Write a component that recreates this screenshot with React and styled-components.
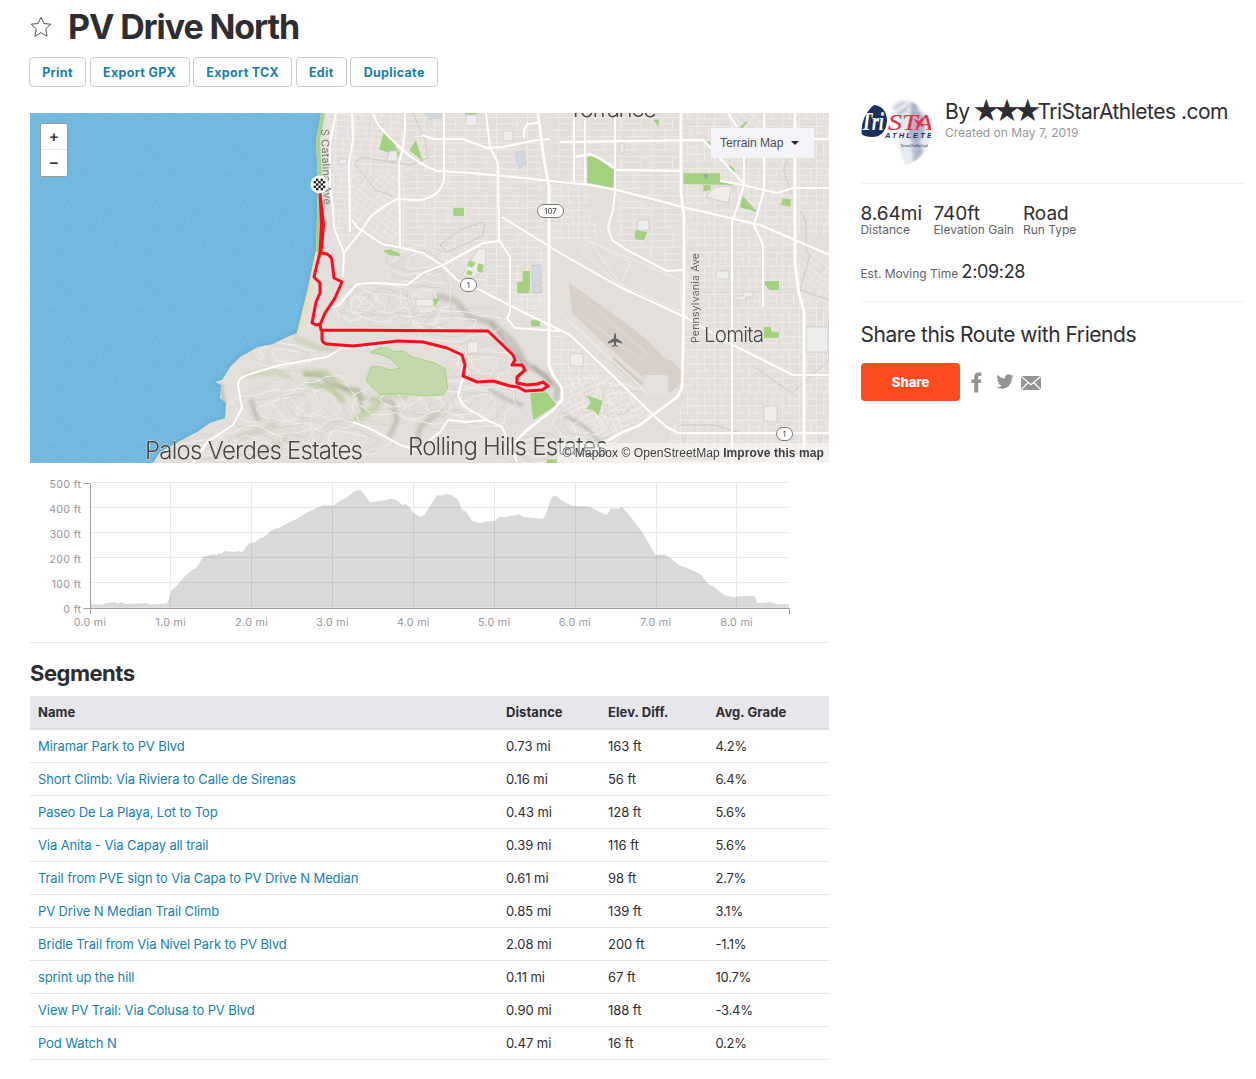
import React from "react"
import styled, { createGlobalStyle } from "styled-components"

const segments = [
  ["Miramar Park to PV Blvd", "0.73 mi", "163 ft", "4.2%"],
  ["Short Climb: Via Riviera to Calle de Sirenas", "0.16 mi", "56 ft", "6.4%"],
  ["Paseo De La Playa, Lot to Top", "0.43 mi", "128 ft", "5.6%"],
  ["Via Anita - Via Capay all trail", "0.39 mi", "116 ft", "5.6%"],
  ["Trail from PVE sign to Via Capa to PV Drive N Median", "0.61 mi", "98 ft", "2.7%"],
  ["PV Drive N Median Trail Climb", "0.85 mi", "139 ft", "3.1%"],
  ["Bridle Trail from Via Nivel Park to PV Blvd", "2.08 mi", "200 ft", "-1.1%"],
  ["sprint up the hill", "0.11 mi", "67 ft", "10.7%"],
  ["View PV Trail: Via Colusa to PV Blvd", "0.90 mi", "188 ft", "-3.4%"],
  ["Pod Watch N", "0.47 mi", "16 ft", "0.2%"],
]

const actions = [
  { label: "Print", width: 57 },
  { label: "Export GPX", width: 100 },
  { label: "Export TCX", width: 99 },
  { label: "Edit", width: 51 },
  { label: "Duplicate", width: 87.6 },
]

// elevation samples, three units to a pixel
const profile =
  "181,402 215,404 230,399 255,397 262,401 275,397 285,402 340,400 352,399 360,403 400,402 412,399 417,385 425,360 440,348 460,323 485,300 498,295 508,280 520,260 548,253 560,255 568,249 574,252 585,243 610,246 625,243 638,246 650,228 660,218 675,217 690,205 703,200 718,186 735,176 748,174 765,163 800,147 835,125 855,117 878,106 912,106 932,91 945,86 970,66 985,60 995,63 1020,97 1070,90 1080,86 1095,88 1107,95 1116,104 1127,102 1138,110 1150,129 1172,140 1185,132 1210,92 1222,75 1235,77 1250,72 1265,76 1285,90 1295,118 1308,125 1327,153 1350,160 1365,155 1395,152 1408,140 1425,142 1438,138 1460,135 1468,132 1480,141 1515,144 1538,147 1543,142 1555,110 1565,82 1575,76 1585,82 1590,88 1610,100 1628,107 1680,110 1710,126 1725,134 1733,132 1743,115 1765,117 1775,110 1800,138 1835,183 1855,218 1875,254 1905,254 1920,263 1948,286 1970,293 2012,313 2035,342 2052,350 2082,375 2110,382 2130,379 2174,378 2182,399 2220,397 2240,403 2277,402"

const coast =
  "M321 113L316 140L318 183L316 250L308 288L297 333L287 337L273 344L258 347L240 357L230 367L222 380L215 382L221 385L220 398L226 403L225 418L210 423L197 432L180 441L160 452L153 463"

const mainRoads = [
  "M336 113L330 143L330 187L333 207L334 228L344 253L343 277",
  "M352 113L353 140L349 163L350 232",
  "M405 113V130L403 147L399 163L400 247",
  "M373 113L378 125L390 138L403 150Q418 164 437 171L473 173L523 178L560 182L590 185L617 190L683 207L760 225L830 255",
  "M444 113V180Q440 197 420 200L397 199Q380 208 370 217L362 230L344 253",
  "M352 220L357 227L382 244L403 248L423 253L442 265L457 280L480 290L513 307L560 330L570 335L610 373L653 415L667 427L678 433H829",
  "M422 135L433 139L463 139L487 148L503 147L537 140L550 139",
  "M486 113L490 147L498 163L499 240L510 257V312L507 318L515 328L560 331",
  "M502 217L560 253L620 287L687 318L733 345L787 372L793 375H829",
  "M499 241L483 243L443 265L423 273L407 285L373 283L357 284L343 300Q338 307 333 307",
  "M538 123L527 124L524 130V138",
  "M574 113V182",
  "M585 113V185",
  "M615 113V192L613 210L608 227L612 240L627 250L667 271L683 270",
  "M560 142L703 140L744 184",
  "M780 139H829",
  "M575 157L590 154L603 160L617 170L682 171",
  "M720 181L743 185L777 193L793 188H829",
  "M764 113V190L754 225L763 245V307",
  "M744 158V185L732 223V463",
  "M728 113L737 127",
  "M193 463L207 442L233 425L242 408L238 385Q238 378 247 375L280 365L327 357L342 348L380 345",
  "M322 330V340",
  "M353 422L373 430L400 445L423 452",
  "M463 377L458 395Q461 404 467 408L487 420L502 427L510 445L517 462",
  "M423 445L440 432L448 420L467 422L487 420",
]

const arterials = [
  "M538 113L543 153L549 187V365L553 375L562 388V400L553 410L527 430L510 447",
  "M681 113V193L684 217V285L683 348L682 388L677 397L653 415L640 425L623 432L600 445L580 459",
  "M795 113V263L798 288L804 312V452L793 463",
]

const hills = [
  [420, 262, 30, 14], [390, 303, 36, 18], [455, 325, 44, 15], [425, 300, 25, 22],
  [280, 410, 42, 22], [320, 405, 40, 26], [250, 445, 40, 16], [345, 440, 40, 18],
  [440, 400, 44, 22], [485, 365, 28, 17], [480, 405, 36, 20], [590, 425, 32, 20],
  [400, 395, 40, 24], [360, 305, 22, 16], [285, 355, 28, 12], [620, 400, 25, 18],
  [535, 450, 30, 12], [205, 450, 27, 11],
]

const blob = (cx, cy, rx, ry, seed) => {
  const points = []
  for (let i = 0; i < 22; i++) {
    const a = (i / 22) * Math.PI * 2
    const r = 1 + 0.16 * Math.sin(a * 3 + seed) + 0.1 * Math.sin(a * 7 + seed * 2)
    points.push(`${(cx + Math.cos(a) * rx * r).toFixed(1)},${(cy + Math.sin(a) * ry * r).toFixed(1)}`)
  }
  return points.join(" ")
}

const Tile = ({ x, y, children }) => (
  <g transform={`translate(${x} ${y}) scale(.33333)`}>{children}</g>
)

const Streets = ({ id, w, h, angle }) => (
  <pattern
    id={id}
    width={w}
    height={h * 6}
    patternUnits="userSpaceOnUse"
    patternTransform={`rotate(${angle})`}
  >
    <path
      d={`M0 .5H${w}M0 ${h}H${w * 0.7}M0 ${h * 2}H${w}M${w * 0.3} ${h * 3}H${w}M0 ${h * 4}H${w}M0 ${h * 5}H${w * 0.8}M.5 0V${h * 6}M${w * 0.45} ${h * 2}V${h * 5}M${w * 0.7} 0V${h * 2}`}
      fill="none"
      stroke="#f1eeea"
      strokeWidth=".8"
    />
  </pattern>
)

const Shield = ({ x, y, w = 16, children }) => (
  <g>
    <rect x={x - w / 2} y={y - 6.5} width={w} height="13" rx="6.5" fill="#fff" stroke="#777" />
    <text x={x} y={y + 3} textAnchor="middle" fontSize="8" fill="#444">
      {children}
    </text>
  </g>
)

const RouteMap = () => (
  <MapDrawing viewBox="30 113 799 350" width="799" height="350">
    <defs>
      <pattern id="water" width="22" height="17" patternUnits="userSpaceOnUse">
        <rect width="22" height="17" fill="#71b8de" />
        <path
          d="M1 2l2 1M6 1h2M11 3l2-1M17 2l2 2M3 7l1 2M8 6l3 1M14 7h2M19 8l2-1M1 12h2M6 11l2 2M11 13l2-1M16 12l1 2M20 14h2M4 15l2 1M9 16h2M14 10h1"
          fill="none"
          stroke="#83c3e6"
          strokeWidth=".7"
        />
        <path d="M5 4h1M12 9h1M18 11h1M2 10h1M15 15h1" stroke="#68afd6" strokeWidth=".8" />
      </pattern>
      <Streets id="grid" w={31} h={6.5} angle={0} />
      <Streets id="gridWest" w={18} h={6} angle={3} />
      <Streets id="gridSlope" w={19} h={6} angle={38} />
      <Streets id="gridFine" w={13} h={5} angle={-25} />
      <Streets id="gridSouth" w={17} h={7} angle={0} />
      <filter id="soft" x="-20%" y="-20%" width="140%" height="140%">
        <feGaussianBlur stdDeviation="1.6" />
      </filter>
      <clipPath id="land">
        <path d={`${coast}H829V113Z`} />
      </clipPath>
    </defs>

    <rect x="30" y="113" width="799" height="350" fill="url(#water)" />
    <path d={coast} fill="none" stroke="#63a9cf" strokeWidth="5" opacity=".5" filter="url(#soft)" />
    <g clipPath="url(#land)">
      <rect x="30" y="113" width="799" height="350" fill="#e4dfda" />
      <path d="M322 113L317 140L319 183L317 252" fill="none" stroke="#a9d187" strokeWidth="6" />
      <path d="M317 252L308 290L297 333" fill="none" stroke="#ebdfb9" strokeWidth="7" />

      <path d="M326 113H405V200L345 250H334Z" fill="url(#gridWest)" />
      <path d="M352 175H399V247L352 222Z" fill="#e4dfda" />
      <path d="M352 175H399V247L352 222Z" fill="url(#gridSlope)" />
      <path d="M405 113H538L550 330L500 300L444 258L402 246Z" fill="url(#grid)" />
      <path d="M550 113H681V205L617 188L550 178Z" fill="url(#grid)" />
      <path d="M550 184L588 187L592 215L601 232L590 240L552 240Z" fill="url(#gridSouth)" />
      <path d="M617 195L681 210V266L668 266L617 240Z" fill="url(#grid)" />
      <path d="M580 250L590 241L630 262L620 286ZM590 241L680 280L682 312L620 284Z" fill="none" stroke="#f1eeea" />
      <path d="M515 263L545 275V325L515 310Z" fill="url(#gridSouth)" />
      <path d="M681 113H829V463H660L683 400Z" fill="url(#gridSouth)" />
      <path d="M797 235H829V300H803Z" fill="#e4dfda" />
      <path d="M797 250H829V300H803Z" fill="url(#gridSlope)" />
      <path d="M565 375L610 375L650 415L580 450L562 410Z" fill="url(#gridFine)" />
      <path d="M552 332L570 337L606 375L570 390L552 370Z" fill="url(#gridSouth)" />
      <path d="M720 113H762V128H737Z" fill="#e4dfda" />
      <path d="M720 113H762V128H737Z" fill="url(#gridSlope)" />

      {/* shaded slopes */}
      <g filter="url(#soft)" fill="none" strokeLinecap="round">
        <path d="M438 296L456 301L470 317L493 323L513 342L526 364L545 375L558 389L556 398" stroke="#bbb7af" strokeWidth="6" opacity=".7" />
        <path d="M490 323L512 350L522 363M534 367L551 383" stroke="#8e8b84" strokeWidth="2.500" opacity=".6" />
        <path d="M296 338L315 347L335 350M246 375L275 372L287 376" stroke="#c9d2b6" strokeWidth="6" opacity=".8" />
        <path d="M305 373L325 373L345 390L363 398M310 383L332 389L342 400" stroke="#bdcba4" strokeWidth="6" opacity=".9" />
        <path d="M305 375L321 376L327 383L343 388L359 390L361 405L364 414" stroke="#989c87" strokeWidth="2.500" opacity=".7" />
        <path d="M251 401L258 420M372 399L392 402L397 420L390 435M437 414L420 427L417 442" stroke="#b5b2a8" strokeWidth="5" opacity=".65" />
        <path d="M221 385L224 402M490 390L508 400L522 405M565 415L585 427L600 442M672 458H710" stroke="#aeaba4" strokeWidth="3.500" opacity=".65" />
        <path d="M240 437L275 425M260 453L285 440M382 393L405 397M430 415L445 410" stroke="#c9cdbb" strokeWidth="6" opacity=".7" />
        <path d="M357 419L375 408L379 400" stroke="#c5d3a8" strokeWidth="8" opacity=".9" />
      </g>

      {hills.map(([x, y, rx, ry], i) => (
        <g key={i} fill="none" strokeWidth=".8">
          <polygon points={blob(x, y, rx, ry, i)} stroke="#f3f0ed" strokeWidth=".9" />
          <polygon points={blob(x, y, rx * 0.72, ry * 0.72, i)} stroke="#cbc6bf" opacity=".6" />
          <polygon points={blob(x, y, rx * 0.46, ry * 0.5, i + 1)} stroke="#f3f0ed" strokeWidth=".9" />
          <polygon points={blob(x, y, rx * 1.2, ry * 1.2, i + 2)} stroke="#cbc6bf" opacity=".45" />
        </g>
      ))}
      <path d="M413 113L425 140L428 158L410 165L360 157L355 165L376 190L392 196M483 222L474 225L460 230L440 245L447 252L470 242L483 235L485 222M791 158Q780 165 786 178T790 195M800 211Q808 220 806 235T810 255L800 290L829 300M680 425L715 425L740 433M753 366L770 378L792 393L829 360V320" fill="none" stroke="#c7c3be" strokeWidth=".8" />

      {/* parks */}
      <g fill="#a4d17f">
        <Tile x={290} y={110}>
          <path d="M282 65L300 80L330 130L320 145L295 128L267 118ZM378 90L397 152L358 120ZM490 293H522V318H490ZM278 422L300 418L328 430L330 438L300 436ZM525 9H560V14H525ZM698 483H720V540H682V516H698ZM86 425L98 430L95 444H84Z" />
        </Tile>
        <Tile x={560} y={110}>
          <path d="M82 140L100 138L162 180L160 233L82 218ZM280 30L297 28L296 52ZM370 190H480V212L525 225L370 222ZM430 225H452V240L430 245ZM548 257L592 306L540 292ZM668 265L692 268V290L663 285ZM225 360L262 366L252 390L225 388ZM615 513H657V540H630L615 524ZM540 52L558 34L562 38L545 56ZM440 96L452 94L450 105ZM510 163L527 182L522 187L508 172Z" />
        </Tile>
        <Tile x={380} y={285}>
          <path fill="#c3d8ad" d="M0 188L25 190L40 200L70 198L95 215L165 235L195 250L203 310L190 330L120 332L60 325L0 328L-38 293L-41 280L-25 245L0 245L30 255L60 250L30 220L0 208L-30 203Z" stroke="#a4d17f" strokeWidth="3" />
          <path d="M450 325L500 322L530 360L460 405ZM620 330L668 348L655 392L640 375L618 372L632 355ZM160 40L180 42L163 67ZM412 -10H448V25H412ZM453 106H480V124H453ZM500 523H530V534H500Z" />
        </Tile>
        <Tile x={600} y={285}>
          <path d="M495 0H537V15H510ZM492 126H512L515 140L537 142V158H492Z" />
        </Tile>
      </g>
      <path d="M704 176h4M706 174v5" stroke="#5ba0c8" />

      {/* airfield */}
      <path d="M569 283L612 313L645 338L665 359L672 361L681 371V383L670 393L640 375L600 340L572 313Z" fill="#d8cec8" />
      <path d="M573 289L650 355L671 380M580 316L642 360L647 354L600 315M590 320L625 350" fill="none" stroke="#e2dad5" />
      <path d="M614 357L643 383L640 388L611 362Z" fill="#d3cac4" />
      <path d="M645 375H668V392L663 396H644Z" fill="#e5e1dc" />
      <path d="M566 318L640 386L650 397" fill="none" stroke="#ece7e2" strokeWidth="2" />

      {/* buildings */}
      <g fill="#efedeb" stroke="#c9cbcb" strokeWidth=".8">
        <path d="M466 115H477V126H466ZM503 131H513V141H503ZM339 159H347V164H339ZM389 151H397V161H387ZM478 249H486L485 270L472 278L462 275ZM416 299H433V306H416ZM467 342L478 341V352L468 354ZM570 353L583 354V367L570 365ZM638 220H649V230H637ZM620 143H624V153H620ZM715 187L732 186L728 203L706 197ZM716 271H729V279H716ZM764 406H777V422L764 421ZM806 327H828V352H806ZM734 296H743V292H753V297H746V300H734Z" />
        <path d="M425 113H441V118L430 119ZM515 152L524 151L526 164L519 169ZM532 265H541V293H532ZM534 285H541V293H534Z" fill="#d0d8dc" />
      </g>
      <path d="M470 260L476 263L472 268L467 265ZM478 263L484 265L482 273L477 271ZM468 270L473 272L471 276L466 274Z" fill="#a4d17f" />

      <g fill="none" stroke="#fff" strokeLinejoin="round">
        {mainRoads.map((d) => (
          <path key={d} d={d} strokeWidth="2" />
        ))}
        {arterials.map((d) => (
          <path key={d} d={d} strokeWidth="2.8" />
        ))}
      </g>
    </g>

    <g fontFamily="Inter, sans-serif" fill="#505050">
      <text transform="translate(321 129) rotate(88)" fontSize="11" textLength="76" fill="#777">
        S Catalina Ave
      </text>
      <text transform="translate(699 343) rotate(-90)" fontSize="10.500" textLength="90" fill="#666">
        Pennsylvania Ave
      </text>
      <g fontSize="24" fontWeight="300" fill="#444" stroke="#f4f1ee" strokeWidth="1.200" strokeOpacity=".7" paintOrder="stroke">
        <text x="568" y="117" textLength="89">Torrance</text>
        <text x="145" y="459" textLength="218">Palos Verdes Estates</text>
        <text x="408" y="455" textLength="200">Rolling Hills Estates</text>
        <text x="704" y="342" fontSize="20.500" textLength="60">Lomita</text>
      </g>
      <Shield x={550.5} y={211} w={26}>107</Shield>
      <Shield x={468.5} y={285}>1</Shield>
      <Shield x={784.5} y={434}>1</Shield>
    </g>
    <path
      transform="translate(615 340)"
      d="M0-7Q1-7 1-4V-2L7 2V3.500L1 2V5L3 6V7L0 6L-3 7V6L-1 5V2L-7 3.500V2L-1-2V-4Q-1-7 0-7Z"
      fill="#666"
    />

    <path
      d="M320 190L321.500 225L320 252L314 277L320 283V293L316 302L312 323L316 325L320 324M320 193L323.500 225L321 253L327 254Q332 257 332 261L334 278L342 282L335 298L325 313L320 325L321 330L488 331L513 355L515 360L512 365H522L525 370L517 377V383L527 385L537 384L543 382L548 386L542 390L525 391L518 387L510 386L493 381L477 382L463 376L465 365L462 355L447 348L423 342L398 341L380 343L353 346L327 344Q322 343 322 339V330"
      fill="none"
      stroke="#ff0b20"
      strokeWidth="3"
      strokeLinejoin="round"
    />
    <circle cx="319.500" cy="184.500" r="9" fill="#fff" />
    <g fill="#222">
      {[-2, -1, 0, 1, 2].map((row) =>
        [-2, -1, 0, 1, 2].map((col) =>
          (row + col) % 2 && Math.abs(row) + Math.abs(col) < 4 ? (
            <rect key={`${row}${col}`} x={318.3 + col * 2.3} y={183.3 + row * 2.3} width="2.400" height="2.400" />
          ) : null
        )
      )}
    </g>
  </MapDrawing>
)

const ElevationChart = () => (
  <Chart viewBox="0 -9 2397 501" width="799" height="167">
    <g fill="none" stroke="#e9e9e9" strokeWidth="3">
      {[0, 1, 2, 3, 4].map((i) => (
        <path key={i} d={`M181 ${37.5 + i * 75}H2277`} />
      ))}
      {[421.5, 664.5, 907.5, 1150.5, 1393.5, 1636.5, 1879.5, 2119.5].map((x) => (
        <path key={x} d={`M${x} 38V412`} />
      ))}
    </g>
    <polygon points={`181,413 ${profile} 2277,413`} fill="#000" fillOpacity=".15" />
    <path d="M160 40.500H181.500V433M160 415.500H2278.500V433" fill="none" stroke="#a2a2a4" strokeWidth="3" />
    {[500, 400, 300, 200, 100, 0].map((ft, i) => (
      <text key={ft} x="154" y={53 + i * 75} textAnchor="end">
        {ft} ft
      </text>
    ))}
    {[0, 1, 2, 3, 4, 5, 6, 7, 8].map((mi) => (
      <text key={mi} x={180 + mi * 242.5} y="468" textAnchor="middle">
        {mi}.0 mi
      </text>
    ))}
  </Chart>
)

const Avatar = () => (
  <svg width="71" height="71" viewBox="0 0 71 71">
    <defs>
      <clipPath id="round">
        <circle cx="35.500" cy="35.500" r="35" />
      </clipPath>
      <filter id="haze" x="-30%" y="-30%" width="160%" height="160%">
        <feGaussianBlur stdDeviation=".9" />
      </filter>
    </defs>
    <g clipPath="url(#round)">
      <rect width="71" height="71" fill="#fff" />
      <g filter="url(#haze)">
        <path d="M31 10Q37 1 50 5L65 17L72 36L64 62L45 70L37 49L42 30Z" fill="#e6e9f0" />
        <path d="M50 6Q58 7 57 14L64 22L63 39L59 45L62 56L54 66L52 65L53 50L47 38L49 24Z" fill="#aab5cb" />
        <path d="M32 13L43 6M38 17L49 9M35 19L46 14M57 45L53 61M50 48L54 64" stroke="#bcc3d1" strokeWidth="2" />
      </g>
      <path d="M1 22Q5 8 14 9Q25 11 26 24Q25 41 11 41Q4 41 0 38Z" fill="#1d315e" />
      <text x="0" y="34" fontFamily="Liberation Serif, serif" fontSize="25" fontWeight="700" fontStyle="italic" fill="#fff" textLength="23" lengthAdjust="spacingAndGlyphs">
        Tri
      </text>
      <text x="27" y="34" fontFamily="Liberation Serif, serif" fontSize="24" fontStyle="italic" fill="#ec3045" stroke="#ec3045" strokeWidth=".2" textLength="62" lengthAdjust="spacingAndGlyphs">
        STAR
      </text>
      <path d="M53 23L58 25L62 21L60 27L63 31L58 29L55 32L56 28Z" fill="#ec3045" />
      <text x="24" y="42" fontFamily="Liberation Sans, sans-serif" fontSize="7.500" fontWeight="700" fontStyle="italic" fill="#1d315e" textLength="47">
        ATHLETE
      </text>
      <text x="40" y="51" fontFamily="Liberation Serif, serif" fontSize="4" fontStyle="italic" fill="#111" textLength="27" lengthAdjust="spacingAndGlyphs">
        Personal Triathlon Coach
      </text>
    </g>
  </svg>
)

const App = () => (
  <>
    <GlobalStyle />
    <Page>
      <Main>
        <Heading>
          <svg width="22" height="22" viewBox="0 0 22 22" fill="none" stroke="#55555c" strokeWidth="1">
            <path d="M11 1.200L13.900 7.500L20.800 8.200L15.700 12.900L17.100 20.200L11 16.700L4.900 20.200L6.300 12.900L1.200 8.200L8.100 7.500Z" strokeLinejoin="round" />
          </svg>
          <h1>PV Drive North</h1>
        </Heading>
        <Actions>
          {actions.map(({ label, width }) => (
            <ActionButton key={label} $width={width}>
              {label}
            </ActionButton>
          ))}
        </Actions>
        <MapWrapper>
          <RouteMap />
          <ZoomControl>
            <button>+</button>
            <button>−</button>
          </ZoomControl>
          <MapType>
            Terrain Map
            <Caret />
          </MapType>
          <Attribution>
            © Mapbox © OpenStreetMap <b>Improve this map</b>
          </Attribution>
        </MapWrapper>
        <ElevationChart />
        <SegmentsTitle>Segments</SegmentsTitle>
        <Table>
          <thead>
            <tr>
              <th>Name</th>
              <th>Distance</th>
              <th>Elev. Diff.</th>
              <th>Avg. Grade</th>
            </tr>
          </thead>
          <tbody>
            {segments.map(([name, distance, elev, grade]) => (
              <tr key={name}>
                <td>
                  <a>{name}</a>
                </td>
                <td>{distance}</td>
                <td>{elev}</td>
                <td>{grade}</td>
              </tr>
            ))}
          </tbody>
        </Table>
      </Main>
      <Sidebar>
        <Author>
          <Avatar />
          <div>
            <h2>
              By <Stars>★★★</Stars>TriStarAthletes .com
            </h2>
            <p>Created on May 7, 2019</p>
          </div>
        </Author>
        <StatsWrapper>
          <Stats>
            <Stat $width={73}>
              <b>8.64mi</b>
              <span>Distance</span>
            </Stat>
            <Stat $width={89.5}>
              <b>740ft</b>
              <span>Elevation Gain</span>
            </Stat>
            <Stat $width={80}>
              <b>Road</b>
              <span>Run Type</span>
            </Stat>
          </Stats>
          <MovingTime>
            Est. Moving Time <b>2:09:28</b>
          </MovingTime>
        </StatsWrapper>
        <ShareTitle>Share this Route with Friends</ShareTitle>
        <ShareRow>
          <ShareButton>Share</ShareButton>
          <svg width="12" height="21" viewBox="0 0 12 21" fill="#949497">
            <path d="M3.200 20.500V11H.3V7.500H3.200V4.800C3.200 2 4.700.4 7.500.4H10.300V3.900H8.600C7.500 3.900 7.200 4.400 7.200 5.300V7.500H10.300L9.900 11H7.200V20.500Z" />
          </svg>
          <svg width="18" height="15" viewBox="0 0 18 15" fill="#949497">
            <path d="M17.700 1.900C17.100 2.200 16.400 2.400 15.700 2.500C16.400 2 17 1.300 17.200.5C16.600.9 15.800 1.200 15 1.400C12.800-1 8.500.7 9.100 4.600C6.100 4.500 3.500 3.100 1.600.8C.7 2.500 1.100 4.500 2.700 5.600C2.100 5.600 1.500 5.400 1.100 5.200C1.100 6.900 2.300 8.500 4 8.900C3.500 9 2.900 9.100 2.400 9C2.800 10.400 4.200 11.500 5.700 11.500C4.200 12.700 2.300 13.300.3 13C8 17.600 16 12.300 15.900 3.900C16.700 3.300 17.300 2.700 17.700 1.900Z" />
          </svg>
          <svg width="20" height="14" viewBox="0 0 20 14">
            <path d="M0 0H20V14H0Z" fill="#949497" />
            <path d="M-.5-.2L10 8.800L20.500-.2M0 14L7.200 6.500M20 14L12.800 6.500" fill="none" stroke="#fff" strokeWidth="1.200" />
          </svg>
        </ShareRow>
      </Sidebar>
    </Page>
  </>
)

const GlobalStyle = createGlobalStyle`
  * {
    box-sizing: border-box;
  }
  body {
    margin: 0;
    background: #fff;
    color: #2d2d32;
    font-family: Inter, "Liberation Sans", sans-serif;
    font-size: 13px;
  }
  h1, h2, p {
    margin: 0;
  }
`
const Page = styled.main`
  display: grid;
  grid-template-columns: 799px 384px;
  gap: 32px;
  padding: 0 0 19px 30px;
`
const Main = styled.section`
  min-width: 0;
`
const Heading = styled.header`
  display: flex;
  align-items: center;
  gap: 16px;
  height: 57px;
  padding-bottom: 3px;

  h1 {
    font-size: 34px;
    font-weight: 700;
    line-height: 40px;
    letter-spacing: -1.1px;
    white-space: nowrap;
  }
`
const Actions = styled.div`
  display: flex;
  gap: 3.6px;
  margin-left: -1px;
`
const ActionButton = styled.button`
  width: ${({ $width }) => $width}px;
  height: 30px;
  padding: 0;
  border: 1px solid #c9c9ce;
  border-radius: 4px;
  background: #fff;
  color: #147fb3;
  font: 700 12.5px Inter, sans-serif;
  letter-spacing: 0.32px;
`
const MapWrapper = styled.section`
  position: relative;
  margin-top: 26px;
  height: 350px;
  overflow: hidden;
`
const MapDrawing = styled.svg`
  display: block;
`
const ZoomControl = styled.div`
  position: absolute;
  top: 10px;
  left: 10px;
  width: 28px;
  border: 1px solid #999;
  border-radius: 3px;
  background: #fff;
  overflow: hidden;

  button {
    display: block;
    width: 26px;
    height: 26px;
    padding: 0;
    border: 0;
    background: #fff;
    color: #333;
    font: 700 15px/24px "Liberation Sans", sans-serif;
  }
  button:first-child {
    height: 25px;
  }
  button + button {
    height: 27px;
    border-top: 1px solid #e4e4e4;
  }
`
const MapType = styled.div`
  position: absolute;
  top: 15px;
  right: 15px;
  display: flex;
  align-items: center;
  gap: 8px;
  width: 103px;
  height: 30px;
  padding-left: 9px;
  background: #f4f4f9;
  color: #4d4d55;
  font: 12px "Liberation Sans", sans-serif;
  white-space: nowrap;
`
const Caret = styled.i`
  border: 4px solid transparent;
  border-top-color: #242428;
  border-bottom: 0;
`
const Attribution = styled.div`
  position: absolute;
  right: 0;
  bottom: 0;
  padding: 0 5px;
  background: rgba(255, 255, 255, 0.5);
  color: #404040;
  font: 12px/20px "Liberation Sans", sans-serif;
  letter-spacing: 0.09px;
`
const Chart = styled.svg`
  display: block;
  margin-top: 4px;

  text {
    fill: #96969a;
    font-family: Inter, sans-serif;
    font-size: 32px;
    letter-spacing: 0.9px;
  }
`
const SegmentsTitle = styled.h2`
  height: 54px;
  margin-top: 8px;
  padding-top: 14px;
  border-top: 1px solid #e4e4e8;
  font-size: 22px;
  font-weight: 700;
  line-height: 32px;
  letter-spacing: -0.5px;
`
const Table = styled.table`
  width: 100%;
  table-layout: fixed;
  border-collapse: separate;
  border-spacing: 0;
  font-size: 13px;

  th,
  td {
    height: 33px;
    padding: 0 8px;
    border-bottom: 1px solid #e2e2e7;
    text-align: left;
    white-space: nowrap;
  }
  td {
    letter-spacing: -0.04px;
  }
  td:first-child {
    letter-spacing: -0.11px;
  }
  td:last-child {
    letter-spacing: -0.25px;
  }
  th {
    height: 34px;
    border-bottom: 2px solid #dcdcdf;
    background: #e6e6eb;
    font-weight: 700;
    letter-spacing: 0.08px;
  }
  th:nth-child(1) {
    width: 468px;
  }
  th:nth-child(2) {
    width: 102px;
  }
  th:nth-child(3) {
    width: 107.500px;
  }
  a {
    color: #147fb3;
  }
`
const Sidebar = styled.aside`
  padding-top: 96px;
`
const Author = styled.div`
  display: flex;
  gap: 13px;
  height: 88px;
  border-bottom: 1px solid #f0f0f3;

  h2 {
    padding-top: 2px;
    font-size: 21px;
    font-weight: 400;
    line-height: 28px;
    letter-spacing: -0.5px;
    white-space: nowrap;
  }
  p {
    color: #97979b;
    font-size: 12px;
    line-height: 14px;
    letter-spacing: 0.02px;
  }
`
const Stars = styled.span`
  font-family: "DejaVu Sans", sans-serif;
  font-size: 25px;
  line-height: 1;
  letter-spacing: -1.6px;
  -webkit-text-stroke: 1.4px #2d2d32;
`
const StatsWrapper = styled.section`
  height: 118px;
  padding-top: 18px;
  border-bottom: 1px solid #f0f0f3;
`
const Stats = styled.div`
  display: flex;
  margin-left: -0.6px;
`
const Stat = styled.div`
  display: grid;
  width: ${({ $width }) => $width}px;
  white-space: nowrap;

  b {
    font-size: 19px;
    font-weight: 400;
    line-height: 24px;
  }
  span {
    color: #626268;
    font-size: 12px;
    line-height: 8px;
  }
`
const MovingTime = styled.div`
  margin: 26px 0 0 -0.6px;
  color: #626268;
  font-size: 12px;
  line-height: 24px;

  b {
    color: #2d2d32;
    font-size: 18px;
    font-weight: 400;
    letter-spacing: -0.35px;
  }
`
const ShareTitle = styled.h2`
  margin-left: -0.6px;
  padding-top: 18px;
  font-size: 21px;
  font-weight: 400;
  line-height: 30px;
  letter-spacing: -0.46px;
`
const ShareRow = styled.div`
  display: flex;
  align-items: center;
  margin-top: 13px;

  svg:nth-of-type(1) {
    margin-left: 10.500px;
  }
  svg:nth-of-type(2) {
    margin: -1px 0 0 13px;
  }
  svg:nth-of-type(3) {
    margin: 2px 0 0 7.500px;
  }
`
const ShareButton = styled.button`
  width: 99px;
  height: 38px;
  border: 0;
  border-radius: 4px;
  background: #fc4c1e;
  color: #fff;
  font: 800 13px Inter, sans-serif;
`
export default App
